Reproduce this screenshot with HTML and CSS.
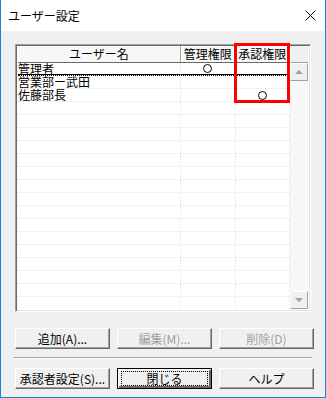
FILE: index.html
```html
<!DOCTYPE html>
<html lang="ja">
<head>
  <meta charset="UTF-8">
  <title>ユーザー設定</title>
  <link rel="stylesheet" href="styles.css">
</head>
<body>
  <div class="window">
    <div class="titlebar">
      <span class="title">ユーザー設定</span>
      <svg class="close" width="11" height="11" viewBox="0 0 11 11">
        <path d="M0.5 0.5 L10.5 10.5 M10.5 0.5 L0.5 10.5" stroke="#000" stroke-width="1" fill="none"/>
      </svg>
    </div>

    <div class="client">
      <div class="listbox">
        <div class="table">
          <div class="row head">
            <div class="cell c-name">ユーザー名</div>
            <div class="cell c-perm">管理権限</div>
            <div class="cell c-perm">承認権限</div>
          </div>
          <div class="row focus">
            <div class="cell c-name">管理者</div>
            <div class="cell c-perm"><span class="mark"></span></div>
            <div class="cell c-perm"></div>
          </div>
          <div class="row">
            <div class="cell c-name">営業部ー武田</div>
            <div class="cell c-perm"></div>
            <div class="cell c-perm"></div>
          </div>
          <div class="row">
            <div class="cell c-name">佐藤部長</div>
            <div class="cell c-perm"></div>
            <div class="cell c-perm"><span class="mark"></span></div>
          </div>
          <!-- empty grid rows below the data -->
          <div class="row empty"><div class="cell c-name"></div><div class="cell c-perm"></div><div class="cell c-perm"></div></div>
          <div class="row empty"><div class="cell c-name"></div><div class="cell c-perm"></div><div class="cell c-perm"></div></div>
          <div class="row empty"><div class="cell c-name"></div><div class="cell c-perm"></div><div class="cell c-perm"></div></div>
          <div class="row empty"><div class="cell c-name"></div><div class="cell c-perm"></div><div class="cell c-perm"></div></div>
          <div class="row empty"><div class="cell c-name"></div><div class="cell c-perm"></div><div class="cell c-perm"></div></div>
          <div class="row empty"><div class="cell c-name"></div><div class="cell c-perm"></div><div class="cell c-perm"></div></div>
          <div class="row empty"><div class="cell c-name"></div><div class="cell c-perm"></div><div class="cell c-perm"></div></div>
          <div class="row empty"><div class="cell c-name"></div><div class="cell c-perm"></div><div class="cell c-perm"></div></div>
          <div class="row empty"><div class="cell c-name"></div><div class="cell c-perm"></div><div class="cell c-perm"></div></div>
          <div class="row empty"><div class="cell c-name"></div><div class="cell c-perm"></div><div class="cell c-perm"></div></div>
          <div class="row empty"><div class="cell c-name"></div><div class="cell c-perm"></div><div class="cell c-perm"></div></div>
          <div class="row empty"><div class="cell c-name"></div><div class="cell c-perm"></div><div class="cell c-perm"></div></div>
          <div class="row empty"><div class="cell c-name"></div><div class="cell c-perm"></div><div class="cell c-perm"></div></div>
          <div class="row empty"><div class="cell c-name"></div><div class="cell c-perm"></div><div class="cell c-perm"></div></div>
          <div class="row empty"><div class="cell c-name"></div><div class="cell c-perm"></div><div class="cell c-perm"></div></div>
          <div class="row empty"><div class="cell c-name"></div><div class="cell c-perm"></div><div class="cell c-perm"></div></div>
          <div class="row empty"><div class="cell c-name"></div><div class="cell c-perm"></div><div class="cell c-perm"></div></div>
        </div>

        <div class="vscroll">
          <div class="corner"></div>
          <div class="sbtn"><span class="arrow up"></span></div>
          <div class="track"></div>
          <div class="sbtn"><span class="arrow down"></span></div>
        </div>

        <!-- annotation box over the 承認権限 column -->
        <div class="annot"></div>
      </div>

      <div class="btnrow">
        <button class="btn">追加(A)...</button>
        <button class="btn" disabled>編集(M)...</button>
        <button class="btn" disabled>削除(D)</button>
      </div>

      <div class="sep"></div>

      <div class="btnrow">
        <button class="btn">承認者設定(S)...</button>
        <button class="btn default"><span class="focus-rect">閉じる</span></button>
        <button class="btn">ヘルプ</button>
      </div>
    </div>
  </div>
</body>
</html>
```

FILE: styles.css
```css
html, body {
  margin: 0;
  padding: 0;
  background: #f0f0f0;
}
body {
  font-family: "Noto Sans CJK JP", "Liberation Sans", sans-serif;
  font-size: 12px;
  color: #000;
}
.window {
  width: 326px;
  height: 398px;
  box-sizing: border-box;
  border: 1px solid #1883d7;
  border-top: none;
  background: #f0f0f0;
  display: flex;
  flex-direction: column;
}
.titlebar {
  height: 31px;
  background: #fff;
  display: flex;
  align-items: center;
  justify-content: space-between;
  padding: 0 9px 0 7px;
  flex-shrink: 0;
}
.title {
  font-size: 12px;
  line-height: 14px;
}
.client {
  flex: 1;
  padding: 13px 11px 0 14px;
  display: flex;
  flex-direction: column;
}

/* list view */
.listbox {
  position: relative;
  width: 296px;
  height: 268px;
  box-sizing: border-box;
  border: 1px solid;
  border-color: #a0a0a0 #fff #fff #a0a0a0;
  box-shadow: inset 1px 1px 0 #696969, inset -1px -1px 0 #e3e3e3;
  padding: 1px 2px 2px 2px;
  background: #fff;
  display: flex;
}
.table {
  width: 274px;
  display: flex;
  flex-direction: column;
  overflow: hidden;
}
.row {
  display: flex;
  flex-shrink: 0;
  height: 12px;
  border-bottom: 1px solid #f0f0f0;
}
.cell {
  box-sizing: border-box;
  line-height: 12px;
  white-space: nowrap;
  border-right: 1px solid #f0f0f0;
  display: flex;
  align-items: center;
}
.c-name {
  width: 164px;
}
.c-perm {
  width: 55px;
  justify-content: center;
}
.row.head {
  height: 16px;
  background: #f7f7f7;
  border-bottom: 1px solid #696969;
}
.row.head .cell {
  justify-content: center;
  line-height: 16px;
  border-right: 1px solid #a0a0a0;
  box-shadow: inset 1px 1px 0 #fff;
}
.row.focus {
  border-bottom: 1px dotted #000;
}
.row.focus .cell {
  border-bottom: 1px solid #000;
}
.row.empty {
  border-bottom: 1px dotted #e4e4e4;
}
.row.empty .cell {
  border-right: 1px dotted #e4e4e4;
}
.mark {
  width: 9px;
  height: 9px;
  box-sizing: border-box;
  border: 1px solid #000;
  border-radius: 50%;
}

/* scrollbar */
.vscroll {
  width: 18px;
  display: flex;
  flex-direction: column;
}
.corner {
  height: 16px;
  background: #f0f0f0;
  border-bottom: 1px solid #a0a0a0;
  border-left: 1px solid #fff;
}
.sbtn {
  height: 16px;
  background: #f0f0f0;
  border: 1px solid;
  border-color: #fff #a0a0a0 #a0a0a0 #fff;
  display: flex;
  align-items: center;
  justify-content: center;
}
.track {
  flex: 1;
  background-color: #fff;
  background-image: repeating-conic-gradient(#f0f0f0 0 25%, #fff 0 50%);
  background-size: 2px 2px;
}
.arrow {
  width: 0;
  height: 0;
  border-left: 4px solid transparent;
  border-right: 4px solid transparent;
}
.arrow.up {
  border-bottom: 4px solid #a0a0a0;
}
.arrow.down {
  border-top: 4px solid #a0a0a0;
}
.annot {
  position: absolute;
  left: 218px;
  top: -2px;
  width: 56px;
  height: 60px;
  box-sizing: border-box;
  border: 3px solid #ff0000;
}

/* buttons */
.btnrow {
  display: flex;
  gap: 7px;
  margin-top: 16px;
}
.sep + .btnrow {
  margin-top: 9px;
}
.btn {
  width: 95px;
  height: 21px;
  padding: 0;
  font-family: inherit;
  font-size: 12px;
  line-height: 14px;
  background: #f0f0f0;
  color: #000;
  border: 1px solid;
  border-color: #fff #696969 #696969 #fff;
  box-shadow: inset -1px -1px 0 #a0a0a0;
  display: flex;
  align-items: center;
  justify-content: center;
}
.btn:disabled {
  color: #a0a0a0;
}
.btn.default {
  border: 1px solid #000;
  box-shadow: inset 1px 1px 0 #fff, inset -2px -2px 0 #696969;
}
.focus-rect {
  width: 85px;
  height: 13px;
  border: 1px dotted #000;
  display: flex;
  align-items: center;
  justify-content: center;
}
.sep {
  margin: 8px 0 0 -1px;
  width: 298px;
  height: 0;
  border-top: 1px solid #a0a0a0;
  border-bottom: 1px solid #fff;
}
```
